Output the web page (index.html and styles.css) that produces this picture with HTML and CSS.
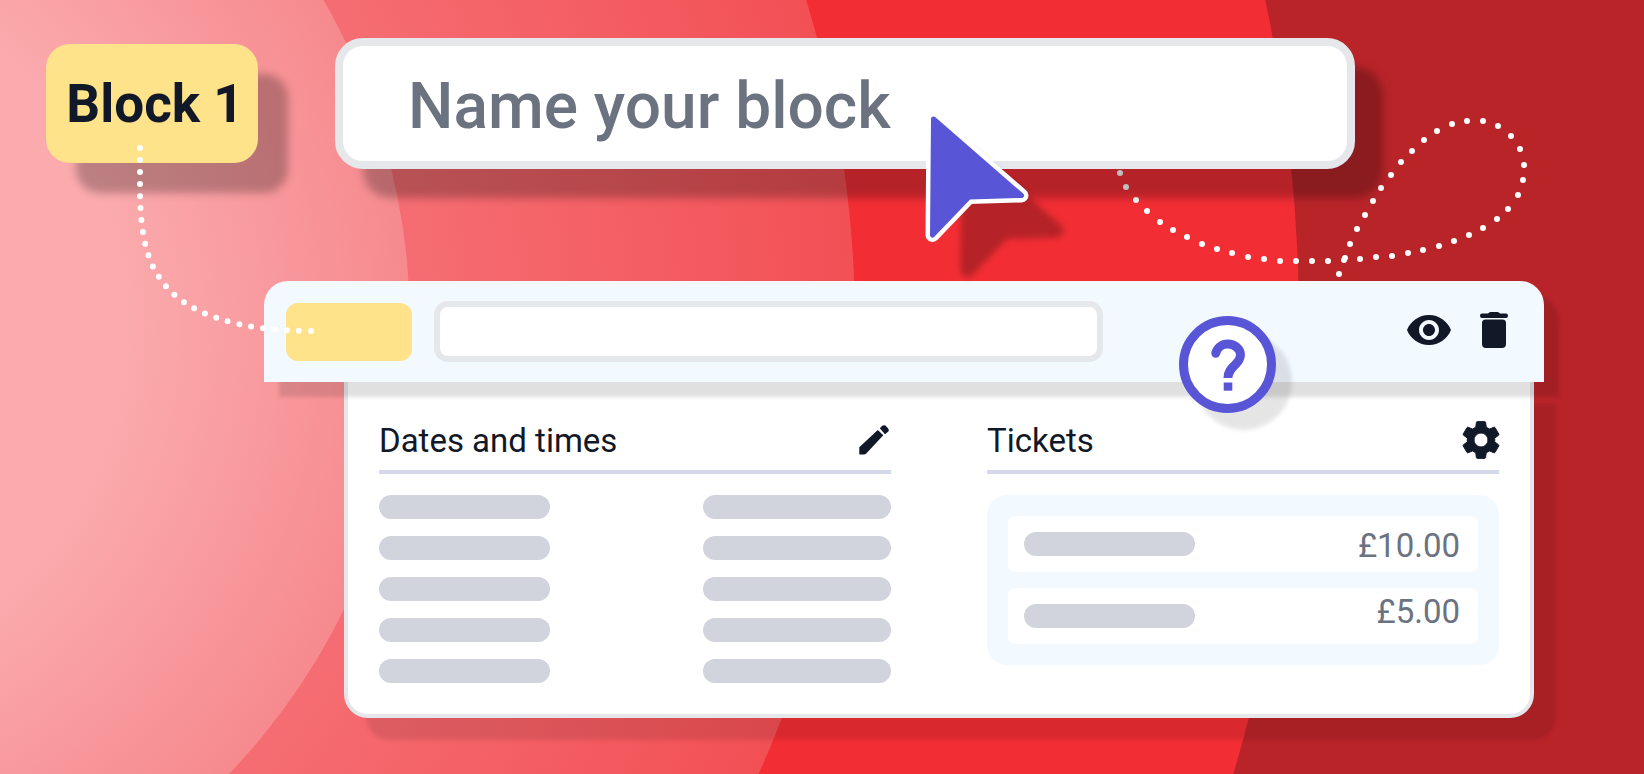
FILE: index.html
```
<!DOCTYPE html>
<html lang="en">
<head>
<meta charset="utf-8">
<title>Block editor</title>
<meta name="viewport" content="width=device-width, initial-scale=1">
<link rel="stylesheet" href="styles.css">
</head>
<body>
<main class="scene">
  <svg class="backdrop" viewBox="0 0 1644 774" preserveAspectRatio="xMidYMid slice" aria-hidden="true">
    <defs>
      <radialGradient id="ring" gradientUnits="userSpaceOnUse" cx="-243" cy="324" r="1098">
        <stop offset=".6" stop-color="#f56d72"/>
        <stop offset="1" stop-color="#f25055"/>
      </radialGradient>
      <radialGradient id="core" gradientUnits="userSpaceOnUse" cx="-240" cy="324" r="651">
        <stop offset=".55" stop-color="#fbabae"/>
        <stop offset="1" stop-color="#f68a8e"/>
      </radialGradient>
    </defs>
    <rect width="1644" height="774" fill="#b92429"/>
    <circle cx="-274" cy="324" r="1573" fill="#f22e34"/>
    <circle cx="-243" cy="324" r="1098" fill="url(#ring)"/>
    <circle cx="-240" cy="324" r="650" fill="url(#core)"/>
  </svg>

  <svg class="trail trail-loop" width="420" height="170" viewBox="1110 110 420 170" aria-hidden="true">
    <path d="M1120 173h0M1126 187h0M1136 200h0M1147 211h0M1160 222h0M1173 230h0M1187 237h0M1202 244h0M1217 249h0M1232 253h0M1248 257h0M1264 259h0M1280 261h0M1296 261h0M1312 261h0M1328 261h0M1344 260h0M1360 259h0M1376 257h0M1392 256h0M1408 253h0M1423 250h0M1439 246h0M1454 241h0M1469 235h0M1483 228h0M1497 219h0M1508 209h0M1518 195h0M1523 180h0M1524 165h0M1520 149h0M1511 136h0M1498 126h0M1483 121h0M1467 121h0M1452 124h0M1437 131h0M1424 140h0M1412 151h0M1401 162h0M1391 175h0M1381 188h0M1373 201h0M1365 215h0M1357 229h0M1350 244h0M1345 258h0M1339 274h0"/>
  </svg>

  <div class="top-row">
    <div class="badge">Block 1</div>
    <input class="name-field" type="text" placeholder="Name your block" aria-label="Name your block">
  </div>

  <section class="editor">
    <header class="editor-bar">
      <div class="mini-badge"></div>
      <input class="mini-field" type="text" aria-label="Block name">
      <div class="bar-space"></div>
      <div class="bar-actions">
        <button class="icon-button" type="button" aria-label="Show block">
          <svg width="44" height="30" viewBox="1 4.5 22 15"><path d="M12 4.5C7 4.5 2.73 7.61 1 12c1.73 4.39 6 7.5 11 7.5s9.270-3.110 11-7.500c-1.730-4.390-6-7.500-11-7.500zM12 17c-2.760 0-5-2.240-5-5s2.240-5 5-5 5 2.240 5 5-2.240 5-5 5zm0-8c-1.660 0-3 1.340-3 3s1.340 3 3 3 3-1.340 3-3-1.340-3-3-3z"/></svg>
        </button>
        <button class="icon-button" type="button" aria-label="Delete block">
          <svg width="28" height="36" viewBox="0 0 28 36"><path d="M8 1.500Q9 0 10.500 0h7Q19 0 20 1.500h6q2 0 2 2.250t-2 2.250H2Q0 6 0 3.750t2-2.250zM2 11q0-3.500 3.500-3.500h17q3.500 0 3.500 3.500V32q0 4-4 4H6q-4 0-4-4z"/></svg>
        </button>
      </div>
      <button class="help" type="button" aria-label="Help">
        <svg width="34" height="52" viewBox="0 0 34 52"><circle cx="4.700" cy="14.500" r="4.300"/><path class="hook" d="M4.700 14.500C6 8.500 11 5 17 5S29.400 9.500 29.400 16C29.400 26 17 27 17 39"/><rect x="12.700" y="43.500" width="8.600" height="8.200"/></svg>
      </button>
    </header>

    <div class="editor-body">
      <section class="column">
        <div class="column-head">
          <h2>Dates and times</h2>
          <button class="icon-button icon-inset" type="button" aria-label="Edit dates and times">
            <svg width="30" height="30" viewBox="0 0 30 30"><path d="M.300 29.500V22.300L18.800 5L24.300 10.300L7 28.700Q6.200 29.500 5 29.500ZM20.800 3.200L23 1Q24.500-.300 26.500.600L29.200 3.400Q30.500 5.200 29.400 6.600L26 9.200Z"/></svg>
          </button>
        </div>
        <div class="lines">
          <div class="line-row"><span class="pill"></span><span class="pill pill-wide"></span></div>
          <div class="line-row"><span class="pill"></span><span class="pill pill-wide"></span></div>
          <div class="line-row"><span class="pill"></span><span class="pill pill-wide"></span></div>
          <div class="line-row"><span class="pill"></span><span class="pill pill-wide"></span></div>
          <div class="line-row"><span class="pill"></span><span class="pill pill-wide"></span></div>
        </div>
      </section>

      <section class="column">
        <div class="column-head">
          <h2>Tickets</h2>
          <button class="icon-button" type="button" aria-label="Ticket settings">
            <svg width="36" height="38" viewBox="2.600 2.400 18.800 19.200"><path stroke="currentColor" stroke-width=".5" stroke-linejoin="round" d="M19.140 12.940c.040-.300.060-.610.060-.940 0-.320-.020-.640-.070-.940l2.030-1.580c.180-.140.230-.410.120-.610l-1.920-3.320c-.120-.220-.370-.290-.590-.220l-2.390.960c-.500-.380-1.030-.700-1.620-.940l-.360-2.540c-.040-.240-.240-.410-.480-.410h-3.840c-.240 0-.430.170-.470.410l-.360 2.540c-.590.240-1.130.570-1.620.940l-2.390-.960c-.220-.080-.470 0-.590.220L2.740 8.870c-.120.210-.080.470.120.610l2.030 1.580c-.050.300-.090.630-.090.940s.020.640.070.940l-2.030 1.580c-.180.140-.230.410-.120.610l1.920 3.320c.120.220.370.290.590.220l2.390-.960c.500.380 1.030.700 1.620.940l.360 2.540c.050.240.240.410.480.410h3.840c.240 0 .440-.170.470-.410l.360-2.540c.590-.240 1.130-.560 1.620-.940l2.390.960c.220.080.470 0 .590-.220l1.920-3.320c.120-.220.070-.470-.120-.610l-2.010-1.580zM12 15.600c-1.980 0-3.600-1.620-3.600-3.600s1.620-3.600 3.600-3.600 3.600 1.620 3.600 3.600-1.620 3.600-3.600 3.600z"/></svg>
          </button>
        </div>
        <div class="tickets">
          <div class="ticket"><span class="pill"></span><span class="price">£10.00</span></div>
          <div class="ticket"><span class="pill"></span><span class="price price-raised">£5.00</span></div>
        </div>
      </section>
    </div>
  </section>

  <svg class="trail trail-drop" width="190" height="200" viewBox="130 140 190 200" aria-hidden="true">
    <path class="dotted" d="M140 148V190C140 232 147 260 159 277C183 315 240 331 312 331"/>
  </svg>

  <svg class="cursor" width="110" height="134" viewBox="922 110 110 134" aria-hidden="true">
    <path class="cursor-edge" d="M933.500 119L1021.500 195.500L969 197L932.500 235Z"/>
    <path class="cursor-fill" d="M933.500 119L1021.500 195.500L969 197L932.500 235Z"/>
  </svg>
</main>
</body>
</html>
```
FILE: styles.css
```
:root {
  --ink: #111827;
  --muted: #6b7280;
  --edge: #e5e7eb;
  --pill: #d1d4dc;
  --sky: #f2f9ff;
  --yellow: #fee38a;
  --violet: #5856d6;
}

* {
  box-sizing: border-box;
}

body {
  margin: 0;
  font-family: Roboto, "Liberation Sans", sans-serif;
  color: var(--ink);
}

.scene {
  position: relative;
  min-height: 100vh;
  padding: 38px 100px 56px 46px;
  overflow: hidden;
}

.backdrop {
  position: absolute;
  inset: 0;
  width: 100%;
  height: 100%;
}

.trail {
  position: absolute;
  fill: none;
  stroke: #fff;
  stroke-width: 6;
  stroke-linecap: round;
}

.trail-loop {
  top: 110px;
  right: 114px;
}

.trail-drop {
  top: 140px;
  left: 130px;
}

.dotted {
  stroke-dasharray: 0 12;
}

.top-row {
  position: relative;
  display: flex;
  align-items: center;
  gap: 77px;
  padding-right: 189px;
}

.badge {
  flex: none;
  width: 212px;
  padding: 2px 0 0 6px;
  border-radius: 24px;
  background: var(--yellow);
  box-shadow: 30px 30px 8px rgba(0, 0, 0, .25);
  font-size: 53px;
  font-weight: 700;
  line-height: 117px;
  text-align: center;
}

.name-field {
  flex: 1;
  min-width: 0;
  height: 131px;
  padding: 5px 65px 0;
  border: 8px solid var(--edge);
  border-radius: 28px;
  background: #fff;
  box-shadow: 28px 29px 8px rgba(0, 0, 0, .25);
  color: var(--ink);
  font: 500 64px Roboto, "Liberation Sans", sans-serif;
}

.name-field::placeholder {
  color: var(--muted);
  opacity: 1;
}

.editor {
  position: relative;
  z-index: 0;
  margin: 112px 0 0 218px;
}

.editor-bar {
  position: relative;
  z-index: 1;
  display: flex;
  align-items: center;
  padding: 20px 36px 20px 22px;
  border-radius: 24px 24px 0 0;
  background: var(--sky);
  box-shadow: 15px 15px 4px rgba(0, 0, 0, .12);
}

.mini-badge {
  flex: none;
  width: 126px;
  height: 58px;
  margin-right: 22px;
  border-radius: 12px;
  background: var(--yellow);
}

.mini-field {
  flex: 657 1 0;
  min-width: 0;
  height: 61px;
  padding: 0;
  border: 6px solid var(--edge);
  border-radius: 14px;
  background: #fff;
  font: 500 24px Roboto, "Liberation Sans", sans-serif;
  text-indent: 16px;
}

.bar-space {
  flex: 304 1 0;
}

.bar-actions {
  display: flex;
  align-items: center;
  gap: 29px;
}

.icon-button {
  display: flex;
  margin: 0 0 3px;
  padding: 0;
  border: 0;
  background: none;
  color: var(--ink);
  fill: currentColor;
  cursor: pointer;
}

.icon-button svg {
  overflow: visible;
}

.icon-inset {
  margin-right: 2px;
}

.help {
  position: absolute;
  top: 35px;
  right: 268px;
  display: flex;
  align-items: center;
  justify-content: center;
  width: 97px;
  height: 97px;
  padding: 0;
  border: 9px solid var(--violet);
  border-radius: 50%;
  background: #fff;
  box-shadow: 16px 17px 4px rgba(0, 0, 0, .1);
  fill: var(--violet);
}

.hook {
  fill: none;
  stroke: var(--violet);
  stroke-width: 9;
}

.editor-body {
  display: grid;
  grid-template-columns: 1fr 1fr;
  gap: 96px;
  margin: 0 10px 0 80px;
  padding: 34px 31px 31px 31px;
  border: 4px solid var(--edge);
  border-top: 0;
  border-radius: 0 0 24px 24px;
  background: #fff;
  box-shadow: 22px 22px 4px rgba(0, 0, 0, .1);
}

.column-head {
  display: flex;
  align-items: center;
  justify-content: space-between;
  height: 58px;
  padding-bottom: 4px;
  border-bottom: 4px solid #d6d9e9;
}

.column-head h2 {
  margin: 0;
  font-size: 33px;
  font-weight: 400;
  line-height: 40px;
}

.lines {
  display: grid;
  gap: 17px;
  margin-top: 21px;
}

.line-row {
  display: flex;
  justify-content: space-between;
}

.pill {
  width: 171px;
  height: 24px;
  border-radius: 12px;
  background: var(--pill);
}

.pill-wide {
  width: 188px;
}

.tickets {
  display: grid;
  gap: 16px;
  margin-top: 21px;
  padding: 21px;
  border-radius: 20px;
  background: var(--sky);
}

.ticket {
  display: flex;
  align-items: center;
  justify-content: space-between;
  height: 56px;
  padding: 0 18px 0 16px;
  border-radius: 8px;
  background: #fff;
}

.price {
  padding-top: 3px;
  color: var(--muted);
  font-size: 33px;
  line-height: 42px;
}

.price-raised {
  align-self: flex-start;
}

.cursor {
  position: absolute;
  top: 110px;
  left: 922px;
  overflow: visible;
  filter: drop-shadow(35px 35px 3px rgba(0, 0, 0, .25));
  stroke-linejoin: round;
}

.cursor-edge {
  fill: #fff;
  stroke: #fff;
  stroke-width: 14;
}

.cursor-fill {
  fill: var(--violet);
  stroke: var(--violet);
  stroke-width: 5;
}
```
